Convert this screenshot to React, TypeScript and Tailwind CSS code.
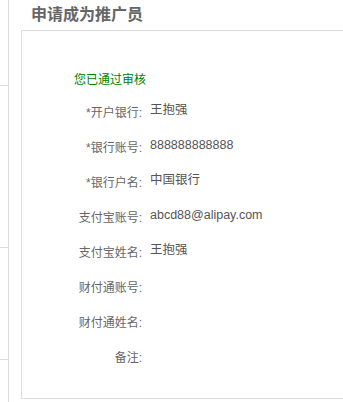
import React from "react";

const rows: { label: string; value?: string }[] = [
  { label: "*开户银行:", value: "王抱强" },
  { label: "*银行账号:", value: "888888888888" },
  { label: "*银行户名:", value: "中国银行" },
  { label: "支付宝账号:", value: "abcd88@alipay.com" },
  { label: "支付宝姓名:", value: "王抱强" },
  { label: "财付通账号:" },
  { label: "财付通姓名:" },
  { label: "备注:" },
];

export default function App() {
  return (
    <div
      className="flex h-[402px] w-[343px] overflow-hidden bg-white"
      style={{ fontFamily: '"Liberation Sans", "Noto Sans CJK SC", sans-serif' }}
    >
      {/* sidebar edge */}
      <div className="w-[9px] shrink-0 border-r border-[#ddd]">
        <div className="h-[86px] border-b border-[#ddd]" />
        <div className="h-[162px] border-b border-[#ddd]" />
        <div className="h-[112px] border-b border-[#ddd]" />
      </div>

      <div className="ml-[12px] shrink-0">
        <h2 className="h-[30px] pl-[10px] text-[16px] leading-[30px] font-bold text-[#666]">
          申请成为推广员
        </h2>
        <div className="h-[369px] w-[340px] border border-[#ddd]">
          <div className="pt-[39px] pl-[52px] text-[12px] leading-[20px] text-[#008000]">
            您已通过审核
          </div>
          <div className="mt-[10px]">
            {rows.map((r) => (
              <div key={r.label} className="flex h-[35px] items-start">
                <div className="mt-[3px] w-[120px] text-right text-[12px] leading-[20px] text-[#666]">
                  {r.label}
                </div>
                <div className="ml-[8px] text-[12.5px] leading-[20px] text-[#555]">
                  {r.value}
                </div>
              </div>
            ))}
          </div>
        </div>
      </div>
    </div>
  );
}
